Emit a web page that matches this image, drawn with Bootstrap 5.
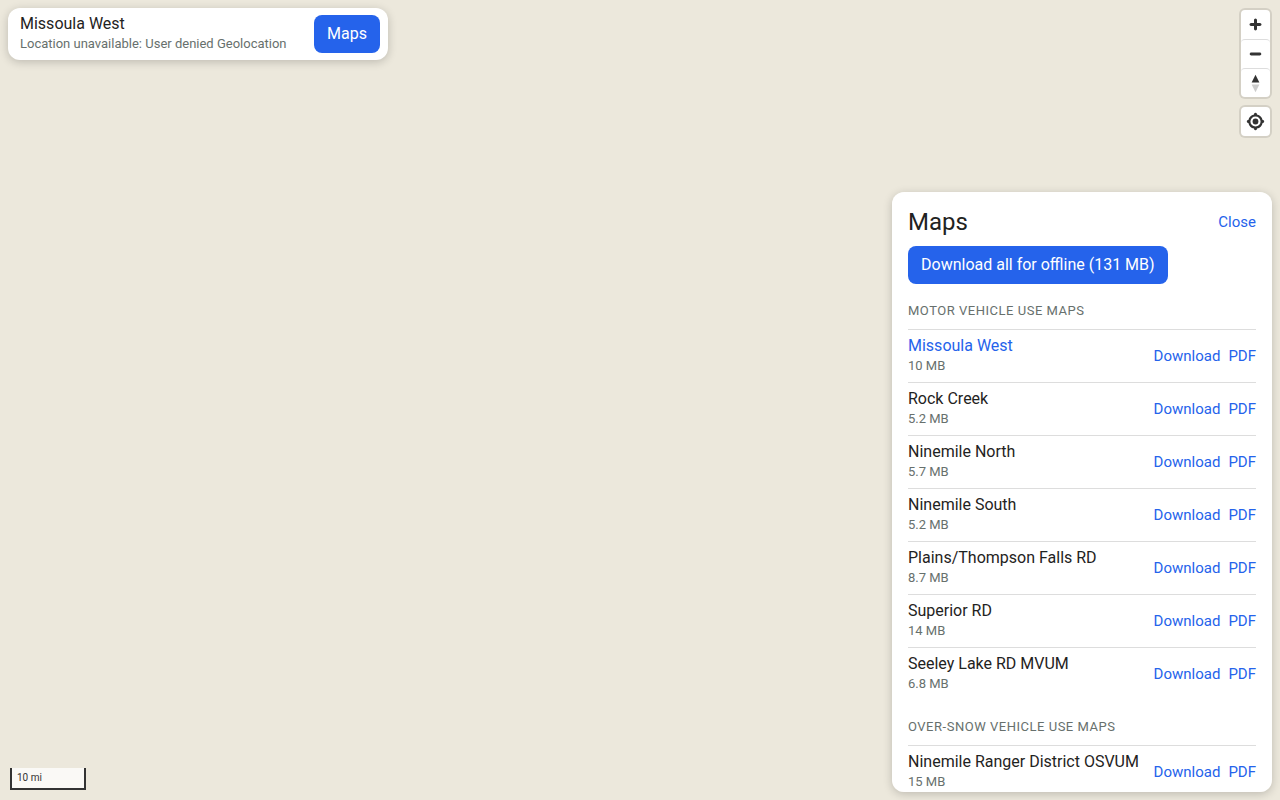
<!DOCTYPE html>
<html lang="en">
<head>
<meta charset="utf-8">
<meta name="viewport" content="width=device-width, initial-scale=1">
<title>Missoula West</title>
<link href="https://cdn.jsdelivr.net/npm/bootstrap@5.3.0/dist/css/bootstrap.min.css" rel="stylesheet">
<style>
  :root { --ink: #1f2322; --muted: #67706d; --accent: #2563eb; --rule: #dddddd; }
  body { font-family: Roboto, "Liberation Sans", sans-serif; font-size: 16px; line-height: 20px; color: var(--ink); }
  .map-view { height: 100vh; background: #ece8dc; }
  .surface { background: #fff; border-radius: 12px; box-shadow: 0 2px 10px rgba(0, 0, 0, .2); }
  .title-bar { top: 8px; left: 8px; width: 380px; max-width: calc(100vw - 64px); padding: 6px 8px 6px 12px; }
  .note { font-size: 13px; color: var(--muted); }
  .btn-accent { --bs-btn-color: #fff; --bs-btn-bg: var(--accent); --bs-btn-hover-color: #fff; --bs-btn-hover-bg: #1d4ed8; --bs-btn-active-color: #fff; --bs-btn-active-bg: #1d4ed8;
    --bs-btn-border-width: 0; --bs-btn-border-radius: 8px; --bs-btn-padding-x: 13px; --bs-btn-line-height: 20px; --bs-btn-padding-y: 9px; }
  .maps-panel { right: 8px; bottom: 8px; width: 380px; max-width: calc(100vw - 16px); height: 75vh; overflow: hidden auto; scrollbar-width: none; padding: 16px; }
  .maps-panel::-webkit-scrollbar { display: none; }
  .panel-head { margin-bottom: 10px; }
  .panel-title { font-size: 24px; line-height: 28px; font-weight: 400; }
  .action { font-size: 15px; line-height: 20px; color: var(--accent); text-decoration: none; }
  .group-title { font-size: 13px; line-height: 20px; font-weight: 400; letter-spacing: .04em; text-transform: uppercase; color: var(--muted); margin: 17px 0 8px; }
  .map-row { border-top: 1px solid var(--rule); padding: 6px 0; }
  .map-name { color: var(--ink); text-decoration: none; }
  .map-name.current { color: var(--accent); }
  .map-tools { top: 10px; right: 10px; gap: 10px; }
  .tool-group { background: #fff; border-radius: 4px; box-shadow: 0 0 0 2px rgba(0, 0, 0, .1); }
  .tool-group button { width: 29px; height: 29px; padding: 0; border: 0; border-radius: 4px; background: transparent; }
  .tool-group button + button { border-top: 1px solid #ddd; }
  .tool-group svg { display: block; width: 29px; height: 29px; fill: #333; }
  .tool-group button + button svg { height: 28px; }
  .scale-bar { left: 10px; bottom: 10px; width: 76px; height: 22px; padding: 0 5px; border: 2px solid #333; border-top: 0; background: rgba(255, 255, 255, .75); font-size: 10px; line-height: 19px; color: #333; }
</style>
</head>
<body>
<main class="map-view position-relative overflow-hidden">
  <header class="title-bar surface position-absolute d-flex align-items-center justify-content-between">
    <div>
      <div>Missoula West</div>
      <div class="note">Location unavailable: User denied Geolocation</div>
    </div>
    <button type="button" class="btn btn-accent">Maps</button>
  </header>

  <div class="map-tools position-absolute d-flex flex-column">
    <div class="tool-group d-flex flex-column">
      <button type="button" aria-label="Zoom in"><svg viewBox="0 0 29 29"><path d="M14.5 8.5c-.75 0-1.5.75-1.5 1.5v3h-3c-.75 0-1.5.75-1.5 1.5S9.25 16 10 16h3v3c0 .75.75 1.5 1.5 1.5S16 19.75 16 19v-3h3c.75 0 1.5-.75 1.5-1.5S19.75 13 19 13h-3v-3c0-.75-.75-1.5-1.5-1.5z"/></svg></button>
      <button type="button" aria-label="Zoom out"><svg viewBox="0 0 29 29"><path d="M10 13c-.75 0-1.5.75-1.5 1.5S9.25 16 10 16h9c.75 0 1.5-.75 1.5-1.5S19.75 13 19 13h-9z"/></svg></button>
      <button type="button" aria-label="Reset bearing to north"><svg viewBox="0 0 29 29"><path d="m10.5 14 4-8 4 8z"/><path d="m10.5 16 4 8 4-8z" fill="#ccc"/></svg></button>
    </div>
    <div class="tool-group d-flex flex-column">
      <button type="button" aria-label="Find my location"><svg viewBox="0 0 20 20"><path d="M10 4C9 4 9 5 9 5v.1A5 5 0 0 0 5.1 9H5s-1 0-1 1 1 1 1 1h.1A5 5 0 0 0 9 14.9v.1s0 1 1 1 1-1 1-1v-.1a5 5 0 0 0 3.9-3.9h.1s1 0 1-1-1-1-1-1h-.1A5 5 0 0 0 11 5.1V5s0-1-1-1zm0 2.5a3.5 3.5 0 1 1 0 7 3.5 3.5 0 1 1 0-7z"/><circle cx="10" cy="10" r="2"/></svg></button>
    </div>
  </div>

  <section class="maps-panel surface position-absolute" aria-labelledby="maps-title">
    <div class="panel-head d-flex align-items-center justify-content-between">
      <h1 class="panel-title m-0" id="maps-title">Maps</h1>
      <button type="button" class="action border-0 bg-transparent p-0">Close</button>
    </div>
    <button type="button" class="btn btn-accent d-block">Download all for offline (131 MB)</button>

    <h2 class="group-title">Motor vehicle use maps</h2>
    <ul class="list-unstyled m-0" id="motor"></ul>
    <h2 class="group-title">Over-snow vehicle use maps</h2>
    <ul class="list-unstyled m-0" id="snow"></ul>
  </section>

  <div class="scale-bar position-absolute">10 mi</div>
</main>

<template id="row">
  <li class="map-row d-flex align-items-center justify-content-between">
    <div>
      <a href="#" class="map-name d-block"></a>
      <div class="note"></div>
    </div>
    <div class="d-flex gap-2">
      <button type="button" class="action border-0 bg-transparent p-0">Download</button>
      <a href="#" class="action">PDF</a>
    </div>
  </li>
</template>

<script src="https://cdn.jsdelivr.net/npm/bootstrap@5.3.0/dist/js/bootstrap.bundle.min.js"></script>
<script>
  const maps = {
    motor: [["Missoula West", "10 MB"], ["Rock Creek", "5.2 MB"], ["Ninemile North", "5.7 MB"], ["Ninemile South", "5.2 MB"],
            ["Plains/Thompson Falls RD", "8.7 MB"], ["Superior RD", "14 MB"], ["Seeley Lake RD MVUM", "6.8 MB"]],
    snow: [["Ninemile Ranger District OSVUM", "15 MB"]]
  };
  const template = document.getElementById("row");
  for (const [group, entries] of Object.entries(maps)) {
    for (const [name, size] of entries) {
      const row = template.content.cloneNode(true);
      const link = row.querySelector(".map-name");
      link.textContent = name;
      link.classList.toggle("current", name === "Missoula West");
      row.querySelector(".note").textContent = size;
      document.getElementById(group).append(row);
    }
  }
</script>
</body>
</html>
